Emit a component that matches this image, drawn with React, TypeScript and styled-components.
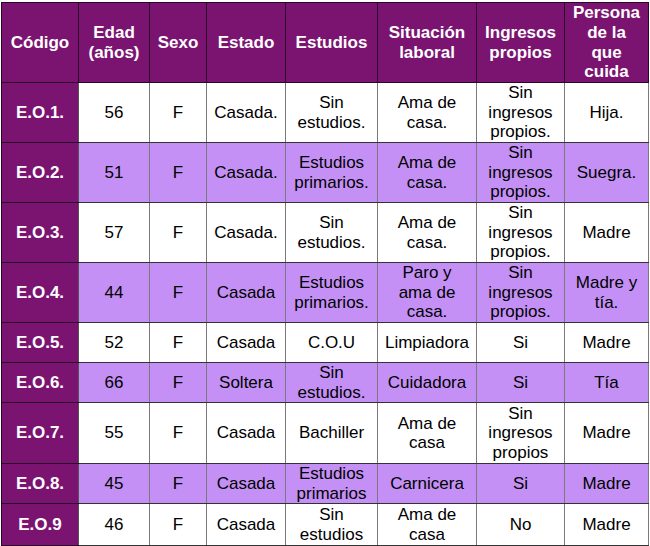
import React from "react";
import styled, { createGlobalStyle } from "styled-components";

const Global = createGlobalStyle`
  html, body { margin: 0; padding: 0; background: #ffffff; }
  body { font-family: "Liberation Sans", Arial, sans-serif; }
`;

const Page = styled.div`
  padding: 2px 0 0 1px;
`;

const Table = styled.table`
  border-collapse: collapse;
  table-layout: fixed;
  width: 647px;
  font-family: "Liberation Sans", Arial, sans-serif;
  font-size: 17px;
  line-height: 1.15;
`;

const HeadCell = styled.th`
  background: #7a1470;
  color: #ffffff;
  font-weight: bold;
  text-align: center;
  vertical-align: middle;
  padding: 0 2px;
  border: 1px solid #2a0628;
`;

const CodeCell = styled.th`
  background: #7a1470;
  color: #ffffff;
  font-weight: bold;
  text-align: center;
  vertical-align: middle;
  padding: 0 2px;
  border-top: 1px solid #2a0628;
  border-bottom: 1px solid #2a0628;
  border-left: 1px solid #2a0628;
  border-right: 1px solid #555555;
`;

const Cell = styled.td<{ $alt: boolean }>`
  background: ${(p) => (p.$alt ? "#c490f6" : "#ffffff")};
  color: #000000;
  text-align: center;
  vertical-align: middle;
  padding: 0 2px;
  border-top: 1px solid #333333;
  border-bottom: 1px solid #333333;
  border-left: 1px solid #7a7a7a;
  border-right: 1px solid #7a7a7a;
`;

const Row = styled.tr<{ $h: number }>`
  height: ${(p) => p.$h}px;
`;

const widths = [77, 71, 57, 79, 92, 99, 88, 84];

const headers = [
  ["Código"],
  ["Edad", "(años)"],
  ["Sexo"],
  ["Estado"],
  ["Estudios"],
  ["Situación", "laboral"],
  ["Ingresos", "propios"],
  ["Persona", "de la", "que", "cuida"],
];

type RowData = { h: number; code: string; cells: string[][] };

const rows: RowData[] = [
  {
    h: 60,
    code: "E.O.1.",
    cells: [["56"], ["F"], ["Casada."], ["Sin", "estudios."], ["Ama de", "casa."], ["Sin", "ingresos", "propios."], ["Hija."]],
  },
  {
    h: 60,
    code: "E.O.2.",
    cells: [["51"], ["F"], ["Casada."], ["Estudios", "primarios."], ["Ama de", "casa."], ["Sin", "ingresos", "propios."], ["Suegra."]],
  },
  {
    h: 60,
    code: "E.O.3.",
    cells: [["57"], ["F"], ["Casada."], ["Sin", "estudios."], ["Ama de", "casa."], ["Sin", "ingresos", "propios."], ["Madre"]],
  },
  {
    h: 60,
    code: "E.O.4.",
    cells: [["44"], ["F"], ["Casada"], ["Estudios", "primarios."], ["Paro y", "ama de", "casa."], ["Sin", "ingresos", "propios."], ["Madre y", "tía."]],
  },
  {
    h: 40,
    code: "E.O.5.",
    cells: [["52"], ["F"], ["Casada"], ["C.O.U"], ["Limpiadora"], ["Si"], ["Madre"]],
  },
  {
    h: 40,
    code: "E.O.6.",
    cells: [["66"], ["F"], ["Soltera"], ["Sin", "estudios."], ["Cuidadora"], ["Si"], ["Tía"]],
  },
  {
    h: 61,
    code: "E.O.7.",
    cells: [["55"], ["F"], ["Casada"], ["Bachiller"], ["Ama de", "casa"], ["Sin", "ingresos", "propios"], ["Madre"]],
  },
  {
    h: 40,
    code: "E.O.8.",
    cells: [["45"], ["F"], ["Casada"], ["Estudios", "primarios"], ["Carnicera"], ["Si"], ["Madre"]],
  },
  {
    h: 42,
    code: "E.O.9",
    cells: [["46"], ["F"], ["Casada"], ["Sin", "estudios"], ["Ama de", "casa"], ["No"], ["Madre"]],
  },
];

const Lines: React.FC<{ lines: string[] }> = ({ lines }) => (
  <>
    {lines.map((l, i) => (
      <React.Fragment key={i}>
        {i > 0 && <br />}
        {l}
      </React.Fragment>
    ))}
  </>
);

export default function App() {
  return (
    <Page>
      <Global />
      <Table>
        <colgroup>
          {widths.map((w, i) => (
            <col key={i} style={{ width: w }} />
          ))}
        </colgroup>
        <thead>
          <Row $h={80}>
            {headers.map((h, i) => (
              <HeadCell key={i}>
                <Lines lines={h} />
              </HeadCell>
            ))}
          </Row>
        </thead>
        <tbody>
          {rows.map((r, ri) => (
            <Row key={r.code} $h={r.h}>
              <CodeCell>{r.code}</CodeCell>
              {r.cells.map((c, ci) => (
                <Cell key={ci} $alt={ri % 2 === 1}>
                  <Lines lines={c} />
                </Cell>
              ))}
            </Row>
          ))}
        </tbody>
      </Table>
    </Page>
  );
}
